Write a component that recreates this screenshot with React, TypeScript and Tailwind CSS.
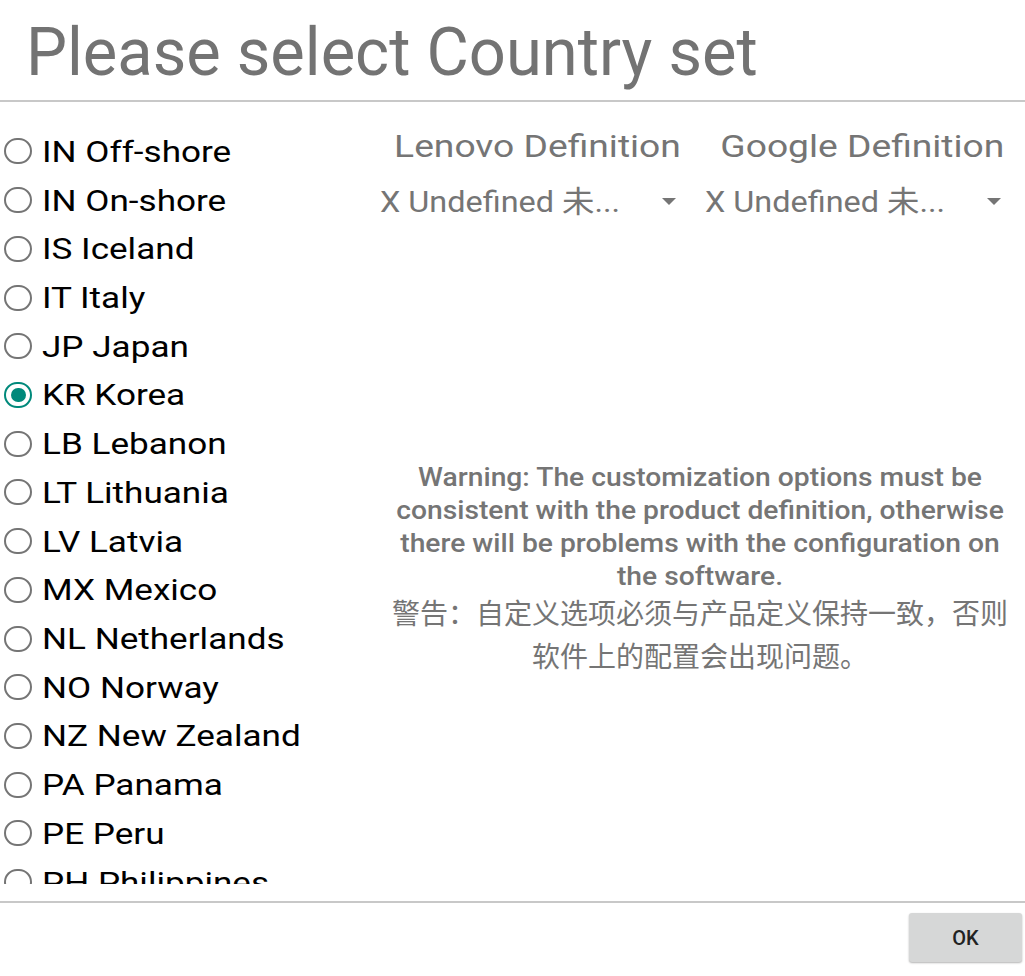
import { useState } from 'react'

const countries = [
  'IN Off-shore', 'IN On-shore', 'IS Iceland', 'IT Italy', 'JP Japan', 'KR Korea',
  'LB Lebanon', 'LT Lithuania', 'LV Latvia', 'MX Mexico', 'NL Netherlands',
  'NO Norway', 'NZ New Zealand', 'PA Panama', 'PE Peru', 'PH Philippines',
]

function Radio({ checked }: { checked: boolean }) {
  return (
    <span className={`flex shrink-0 items-center justify-center w-[28px] h-[26px] rounded-full border-2 ${checked ? 'border-[#00897b]' : 'border-[#757575]'}`}>
      {checked && <span className="w-[15px] h-[14px] rounded-full bg-[#00897b]" />}
    </span>
  )
}

function Spinner() {
  return (
    <div className="flex items-center h-[50px] pt-[8px] pl-[5px] pr-[24px]">
      <span className="flex-1 text-[30px] text-[#757575] whitespace-nowrap">
        <span className="inline-block origin-left scale-x-[1.08]">X Undefined 未...</span>
      </span>
      <svg width="14" height="7" viewBox="0 0 14 7"><path d="M0 0h14L7 7z" fill="#757575" /></svg>
    </div>
  )
}

export default function App() {
  const [selected, setSelected] = useState('KR Korea')

  return (
    <div className="w-[1025px] h-[976px] bg-white flex flex-col overflow-hidden" style={{ fontFamily: 'Roboto, "Noto Sans CJK SC", sans-serif' }}>
      <div className="h-[100px] flex items-center pl-[26px] pt-[6px]">
        <h1 className="text-[66px] text-[#737373] leading-none">
          <span className="inline-block origin-left scale-x-[0.985]">Please select Country set</span>
        </h1>
      </div>
      <div className="h-[2px] bg-[#c8c8c8]" />

      <div className="flex h-[799px]">
        <div className="w-[375px] h-[782px] overflow-hidden pt-[25px]">
          {countries.map(c => (
            <div key={c} onClick={() => setSelected(c)} className="h-[48.73px] flex items-center gap-[10px] pl-[4px]">
              <Radio checked={selected === c} />
              <span className="text-[30px] text-black whitespace-nowrap">
                <span className="inline-block origin-left scale-x-[1.17]">{c}</span>
              </span>
            </div>
          ))}
        </div>

        <div className="flex-1 flex flex-col">
          <div className="grid grid-cols-2 pt-[20px]">
            <div>
              <p className="text-center text-[31px] text-[#757575] leading-[50px]">
                <span className="inline-block scale-x-[1.2]">Lenovo Definition</span>
              </p>
              <Spinner />
            </div>
            <div>
              <p className="text-center text-[31px] text-[#757575] leading-[50px]">
                <span className="inline-block scale-x-[1.2]">Google Definition</span>
              </p>
              <Spinner />
            </div>
          </div>

          <div className="mt-[239px] text-center text-[#757575]">
            <p className="text-[26px] font-medium leading-[33px] scale-x-[1.086]">
              Warning: The customization options must be<br />
              consistent with the product definition, otherwise<br />
              there will be problems with the configuration on<br />
              the software.
            </p>
            <p className="text-[28px] leading-[43px]">
              警告：自定义选项必须与产品定义保持一致，否则<br />
              软件上的配置会出现问题。
            </p>
          </div>
        </div>
      </div>

      <div className="h-[2px] bg-[#c8c8c8]" />
      <div className="flex justify-end pt-[10px] pr-[3px]">
        <button className="w-[113px] h-[49px] bg-[#d6d7d7] rounded-[3px] shadow-[0_1px_2px_rgba(0,0,0,0.3)] text-[20px] text-[#222] font-medium">OK</button>
      </div>
    </div>
  )
}
